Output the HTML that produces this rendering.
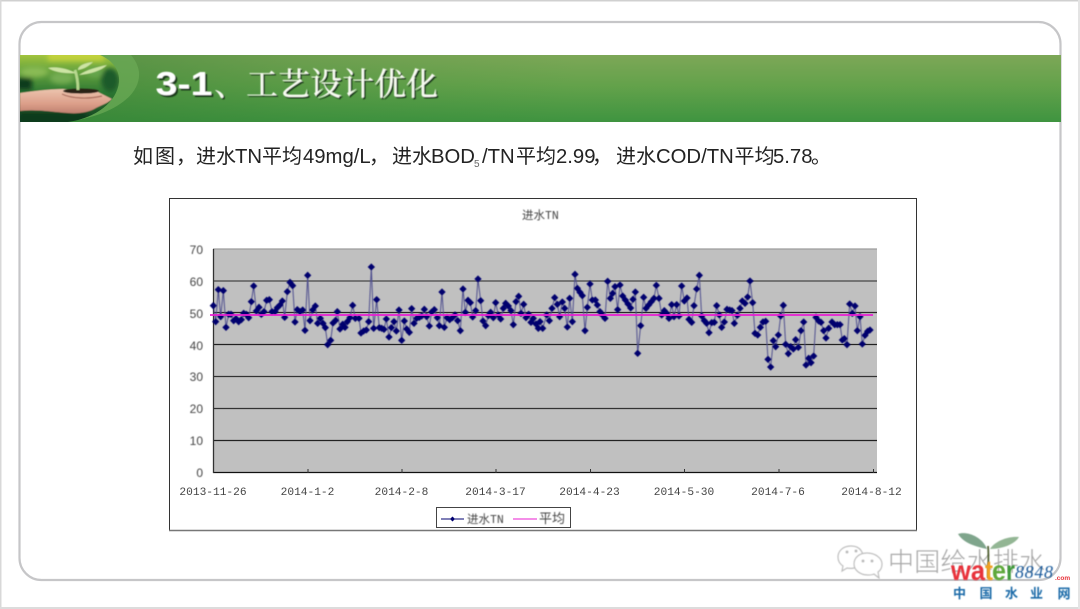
<!DOCTYPE html>
<html lang="zh"><head><meta charset="utf-8"><title>3-1、工艺设计优化</title>
<style>
html,body{margin:0;padding:0;background:#fff}
#p{position:relative;width:1080px;height:609px;overflow:hidden;background:#fff;font-family:"Liberation Sans","Noto Sans CJK SC",sans-serif}
svg{position:absolute;left:0;top:0}
</style></head><body><div id="p">
<svg width="1080" height="609" viewBox="0 0 1080 609" font-family="'Liberation Mono','Noto Serif CJK SC',monospace">
<defs>
<linearGradient id="band" x1="0" y1="0" x2="0" y2="1"><stop offset="0" stop-color="#7da757"/><stop offset=".45" stop-color="#64a24b"/><stop offset="1" stop-color="#3f9440"/></linearGradient>
<linearGradient id="bandL" x1="0" y1="0" x2="1" y2="0"><stop offset="0" stop-color="#2f7a30" stop-opacity=".55"/><stop offset=".5" stop-color="#2f7a30" stop-opacity=".18"/><stop offset="1" stop-color="#2f7a30" stop-opacity="0"/></linearGradient>
<linearGradient id="bg" x1="0" y1="0" x2="0" y2="1"><stop offset="0" stop-color="#a9c83c"/><stop offset=".22" stop-color="#6fa83f"/><stop offset=".55" stop-color="#2f7a33"/><stop offset="1" stop-color="#123f20"/></linearGradient>
<linearGradient id="hand" x1="0" y1="0" x2="0" y2="1"><stop offset="0" stop-color="#ecc4ae"/><stop offset=".6" stop-color="#dc9f8a"/><stop offset="1" stop-color="#c08070"/></linearGradient>
<clipPath id="ell"><path d="M20 55H100C112 60 120 70 119 82C117 102 96 118 68 122H20Z"/></clipPath>
<filter id="b1" x="-10%" y="-10%" width="120%" height="120%"><feGaussianBlur stdDeviation=".45"/></filter>
<filter id="b3" x="-5%" y="-5%" width="110%" height="110%"><feGaussianBlur stdDeviation=".3"/></filter>
<filter id="b2" x="-30%" y="-30%" width="160%" height="160%"><feGaussianBlur stdDeviation="2.5"/></filter>
<marker id="d" markerUnits="userSpaceOnUse" markerWidth="24" markerHeight="24" refX="12" refY="12"><path d="M12 1L23 12L12 23L1 12Z" fill="#00006e"/></marker>
</defs>

<!-- outer edge -->
<rect x="0" y="0" width="1080" height="1.5" fill="#d0d0d0"/>
<rect x="0" y="0" width="1.5" height="609" fill="#d8d8d8"/>
<rect x="0" y="607" width="1080" height="2" fill="#dcdcdc"/>
<rect x="1078" y="0" width="2" height="609" fill="#e4e4e4"/>

<!-- rounded panel -->
<rect x="19.500" y="22" width="1041" height="558" rx="22" ry="22" fill="#fff" stroke="#c6c6c8" stroke-width="2.200"/>

<!-- band -->
<rect x="20" y="55" width="1041" height="67" fill="url(#band)"/>
<rect x="20" y="55" width="560" height="67" fill="url(#bandL)"/>
<path d="M66 122C112 116 141 96 139 72C138 65 135 60 131 55H60V122Z" fill="#6cab57" opacity=".7"/>
<g clip-path="url(#ell)">
<g filter="url(#b1)">
<rect x="18" y="53" width="104" height="71" fill="url(#bg)"/>
<g filter="url(#b2)">
<rect x="48" y="52" width="56" height="9" fill="#c2d23a"/>
<ellipse cx="34" cy="72" rx="14" ry="5" fill="#8abb55"/>
<ellipse cx="62" cy="78" rx="12" ry="6" fill="#75ad52"/>
<ellipse cx="110" cy="80" rx="9" ry="12" fill="#1b5a2a"/>
<ellipse cx="95" cy="72" rx="8" ry="5" fill="#66a64e"/>
<rect x="16" y="78" width="16" height="12" fill="#0f3a1a"/>
<rect x="18" y="112" width="70" height="12" fill="#0e3a1c"/>
</g>
<path d="M20 93C34 91 50 89 63 89C74 90 88 90 98 92L104 95L112 99C108 103 102 105 96 108C88 113 76 114 68 113C52 112 36 109 20 111Z" fill="url(#hand)"/>
<path d="M62 94C72 99 90 99 102 96" stroke="#a86a5a" stroke-width="1.200" fill="none"/>
<ellipse cx="81" cy="91" rx="18" ry="2.600" fill="#2a2418"/>
<path d="M78 90C78 83 77 76 75 70" stroke="#b5d78c" stroke-width="2.800" fill="none"/>
<path d="M76 73C68 69 57 66 48 68C54 72 66 74 76 73Z M78 70C78 66 84 63 93 62C89 66 84 69 78 70Z M79 75C86 70 97 67 107 65C101 71 90 74 79 75Z" fill="#cde4a4"/>
</g>
</g>

<!-- title -->
<g filter="url(#b1)">
<text x="157.500" y="97" font-family="'Liberation Sans',sans-serif" font-weight="700" font-size="33" fill="#1c3d1c" textLength="57" lengthAdjust="spacingAndGlyphs">3-1</text>
<text x="155.500" y="95" font-family="'Liberation Sans',sans-serif" font-weight="700" font-size="33" fill="#fff" textLength="57" lengthAdjust="spacingAndGlyphs">3-1</text>
<text x="215.500" y="96.500" font-family="'Noto Serif CJK SC',serif" font-size="32" fill="#1c3d1c" font-weight="500">、工艺设计优化</text>
<text x="214" y="95" font-family="'Noto Serif CJK SC',serif" font-size="32" fill="#f8fbf2" font-weight="500">、工艺设计优化</text>
</g>

<!-- body sentence -->
<g font-family="'Liberation Sans','Noto Sans CJK SC',sans-serif" fill="#222" filter="url(#b3)">
<g font-size="20" font-family="'Noto Sans CJK SC',sans-serif" font-weight="400">
<text x="133" y="163">如</text><text x="155" y="163">图</text><text x="176" y="163">，</text><text x="196" y="163">进水</text><text x="262" y="163">平均</text><text x="369" y="163">，</text><text x="392" y="163">进水</text><text x="516" y="163">平均</text><text x="592" y="163">，</text><text x="616" y="163">进水</text><text x="734.500" y="163">平均</text><text x="811" y="163">。</text>
</g>
<g font-size="20.300">
<text x="235" y="163">TN</text><text x="303" y="163">49mg/L</text><text x="431" y="163">BOD</text><text x="474" y="167" font-size="10" fill="#666">5</text><text x="482" y="163">/TN</text><text x="556" y="163">2.99</text><text x="656" y="163">COD/TN</text><text x="773" y="163">5.78</text>
</g>
</g>

<!-- chart box -->
<rect x="169.500" y="198.500" width="747" height="332" fill="#fff" stroke="#333" stroke-width="1"/>
<path d="M169 530.500H917" stroke="#777" stroke-width="1.400"/>
<text x="522" y="219" font-size="11.500" fill="#444" font-family="'Liberation Mono','Noto Sans CJK SC',monospace" filter="url(#b1)">进水TN</text>

<!-- plot -->
<rect x="213" y="248.500" width="664" height="224" fill="#c0c0c0"/>
<g stroke-width="1.300">
<path d="M213 249H877" stroke="#9d9d9d"/>
<path d="M213 281H877" stroke="#5a5a5a" stroke-width="1.600"/>
<path d="M213 312.500H877" stroke="#2a2a2a"/>
<path d="M213 344.500H877" stroke="#222"/>
<path d="M213 376.500H877" stroke="#333"/>
<path d="M213 408.500H877" stroke="#333"/>
<path d="M213 440.500H877" stroke="#222"/>
<path d="M213 472.500H877" stroke="#111"/>
<path d="M213.500 249V473" stroke="#333"/>
<path d="M308 469V473M402 469V473M496 469V473M590.500 469V473M684.500 469V473M779 469V473M873.500 469V473" stroke="#333" fill="none" stroke-width="1"/>
</g>

<!-- series -->
<g filter="url(#b1)">
<line x1="538.300" y1="328.300" x2="540" y2="321.700" stroke="#50508f" stroke-width="1"/>
<g transform="translate(160 195) scale(.33333)" fill="none" stroke="#50508f" stroke-width="3">
<polyline marker-start="url(#d)" marker-mid="url(#d)" marker-end="url(#d)" points="160,332 167,380 175,284 182,365 190,287 198,397 206,358 213,358 221,377 228,371 236,380 244,374 251,355 259,358 266,368 274,320 281,273 289,348 297,337 304,358 312,350 320,316 328,314 336,350 345,350 352,338 360,330 367,318 374,367 382,290 390,262 398,272 405,381 412,344 420,350 428,345 435,406 443,241 450,377 458,345 466,333 473,385 481,370 489,385 496,398 503,449 512,436 519,384 527,376 532,350 540,402 548,388 555,397 562,380 570,368 578,331 586,370 597,370 603,414 611,408 619,405 626,380 634,216 641,400 650,314 658,398 665,400 672,403 679,372 687,426 694,398 702,380 709,408 717,345 725,436 733,378 740,402 748,412 755,341 762,385 770,370 778,367 785,363 793,343 800,365 808,393 815,351 823,344 832,368 838,392 846,291 853,397 861,368 869,374 877,368 885,360 893,377 901,407 909,282 916,352 924,316 931,323 938,366 947,347 954,252 962,317 969,378 977,392 985,362 992,352 1000,368 1007,323 1015,360 1022,372 1030,340 1037,325 1045,333 1053,347 1060,389 1068,320 1076,304 1083,355 1091,328 1098,368 1106,358 1113,382 1120,370 1128,387 1135,400"/>
</g>
<g transform="translate(540 240) scale(.33333)" fill="none" stroke="#50508f" stroke-width="3">
<polyline marker-start="url(#d)" marker-mid="url(#d)" marker-end="url(#d)" points="0,245 8,265 20,225 28,242 36,205 44,173 52,193 59,230 67,186 74,205 82,261 89,175 97,245 105,103 112,145 120,157 127,167 135,272 142,202 150,132 157,180 166,180 172,195 180,215 187,225 195,235 203,124 211,175 218,160 225,140 233,209 240,135 248,168 256,180 264,192 272,204 279,178 286,156 293,340 302,257 311,172 318,205 326,195 334,185 342,175 349,136 357,175 365,225 373,212 380,220 387,235 395,194 402,230 410,194 417,228 425,138 433,183 441,174 447,238 455,247 462,197 470,147 478,106 485,228 493,242 500,250 507,278 515,248 523,247 530,197 538,225 545,262 553,246 561,208 569,210 576,212 583,250 592,226 600,205 607,183 615,190 623,171 630,123 638,188 645,280 653,285 661,262 669,246 677,244 684,358 692,381 700,302 707,320 715,285 722,228 730,196 737,313 745,341 752,320 760,327 767,299 775,322 783,272 791,246 798,375 806,355 813,368 821,348 828,232 836,243 843,247 851,272 858,294 866,265 876,246 884,254 892,254 900,254 907,300 913,296 921,314 929,192 937,220 945,198 952,272 960,230 967,312 975,286 983,274 990,270"/>
</g>
</g>
<path d="M210 315H873" stroke="#e81ed2" stroke-width="1.800"/>

<!-- y labels -->
<g font-family="'Liberation Sans',sans-serif" font-size="12" fill="#444" text-anchor="end" filter="url(#b1)">
<text x="203" y="254">70</text><text x="203" y="286">60</text><text x="203" y="318">50</text><text x="203" y="350">40</text><text x="203" y="381">30</text><text x="203" y="413">20</text><text x="203" y="445">10</text><text x="203" y="477">0</text>
</g>
<!-- x labels -->
<g font-size="11.200" fill="#444" text-anchor="middle">
<text x="213" y="495">2013-11-26</text><text x="307.500" y="495">2014-1-2</text><text x="401.500" y="495">2014-2-8</text><text x="495.500" y="495">2014-3-17</text><text x="589.500" y="495">2014-4-23</text><text x="684" y="495">2014-5-30</text><text x="778" y="495">2014-7-6</text><text x="871.500" y="495">2014-8-12</text>
</g>

<!-- legend -->
<rect x="436.500" y="507.500" width="134" height="20" fill="#fff" stroke="#444" stroke-width="1"/>
<path d="M441 519H464" stroke="#000070" stroke-width="1"/>
<path d="M452.500 516.500L455 519L452.500 521.500L450 519Z" fill="#000070"/>
<text x="467" y="523" font-size="11.500" fill="#444" font-family="'Liberation Mono','Noto Sans CJK SC',monospace" filter="url(#b1)">进水TN</text>
<path d="M513 519H537" stroke="#e81ed2" stroke-width="1"/>
<text x="539" y="523" font-size="13" fill="#444" font-family="'Noto Sans CJK SC',sans-serif" filter="url(#b1)">平均</text>

<!-- wechat watermark -->
<g fill="#fff" stroke="#bdbdbd" stroke-width="1.200" filter="url(#b1)">
<path d="M851 546C842 546 838 552 838 557C838 561 840 564 843 566L842 571L847 568C852 569 858 568 861 564C866 553 860 546 851 546Z"/>
<path d="M867 553C859 553 854 558 854 564C854 570 860 575 868 575C870 575 872 575 874 574L879 578L878 572C881 570 882 567 882 564C882 558 875 553 867 553Z"/>
<circle cx="847" cy="552" r=".9" fill="#aaa"/><circle cx="856" cy="551" r=".9" fill="#aaa"/><circle cx="863" cy="561" r=".9" fill="#aaa"/><circle cx="872" cy="561" r=".9" fill="#aaa"/>
</g>
<text x="888" y="571" font-family="'Noto Sans CJK SC',sans-serif" font-size="26" font-weight="300" fill="#a8a8a8" filter="url(#b1)" textLength="157">中国给水排水</text>

<!-- seedling logo -->
<g filter="url(#b1)">
<path d="M988 578C988 566 989 556 988 546" stroke="#4f5f33" stroke-width="1.800" fill="none"/>
<path d="M987 549C978 547 964 544 958 534C966 531 982 536 987 549Z" fill="#7fa58c"/>
<path d="M990 549C995 541 1008 536 1019 537C1015 544 1003 549 990 549Z" fill="#93b694"/>
</g>
<g font-family="'Liberation Sans',sans-serif" font-weight="700" font-size="28" filter="url(#b1)">
<text x="951" y="580" fill="#e8323a" textLength="34" lengthAdjust="spacingAndGlyphs">wa</text><text x="985" y="580" fill="#f0a020" textLength="8" lengthAdjust="spacingAndGlyphs">t</text><text x="992" y="580" fill="#5fa83a" textLength="14" lengthAdjust="spacingAndGlyphs">e</text><text x="1006" y="580" fill="#3f9a3a" textLength="9" lengthAdjust="spacingAndGlyphs">r</text>
</g>
<text x="1015" y="578" font-family="'Liberation Serif',serif" font-style="italic" font-size="18" fill="#1f5c9c" filter="url(#b1)" textLength="38">8848</text>
<text x="1055" y="580" font-family="'Liberation Sans',sans-serif" font-size="6.500" font-weight="700" fill="#e8323a">.com</text>
<g font-family="'Noto Sans CJK SC',sans-serif" font-weight="700" font-size="13" fill="#1a6aa8" filter="url(#b1)">
<text x="953" y="598">中</text><text x="979.500" y="598">国</text><text x="1005" y="598">水</text><text x="1030" y="598">业</text><text x="1057.500" y="598">网</text>
</g>
</svg>
</div></body></html>
